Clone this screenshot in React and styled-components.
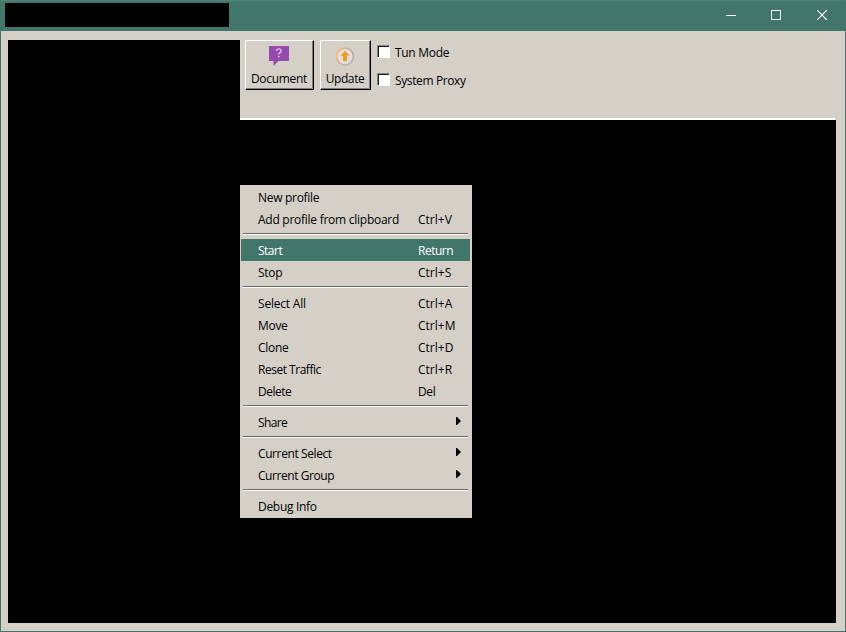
import React from "react";
import styled, { createGlobalStyle } from "styled-components";

const Global = createGlobalStyle`
  *, *::before, *::after { box-sizing: border-box; }
  body {
    margin: 0;
    overflow: hidden;
    background: #d4d0c8;
    font: 12px/16px "Open Sans", "Noto Sans", sans-serif;
    color: #000;
    cursor: default;
  }
`;

const Window = styled.div`
  width: 846px;
  height: 632px;
  display: flex;
  flex-direction: column;
  background: #d4d0c8;
  border: 1px solid #43766b;
  border-top: 0;
`;

const TitleBar = styled.header`
  height: 31px;
  flex: none;
  display: flex;
  justify-content: space-between;
  background: #43766b;
  border-top: 1px solid #508277;
  padding: 2px 0 0 4px;
`;

const TitleBlock = styled.div`
  width: 224px;
  height: 24px;
  background: #000;
`;

const WindowControls = styled.div`
  display: flex;
  margin: -3px -1px 0 0;
`;

const ControlButton = styled.button`
  width: 46px;
  height: 31px;
  padding: 0;
  border: 0;
  background: none;
  svg { display: block; }
`;

const Client = styled.main`
  flex: 1;
  display: flex;
  margin: 9px 9px 8px 7px;
  background: #000;
`;

const SidePanel = styled.div`
  width: 232px;
  background: #000;
`;

const Content = styled.div`
  flex: 1;
  display: flex;
  flex-direction: column;
`;

const Toolbar = styled.div`
  height: 78px;
  display: flex;
  align-items: flex-start;
  padding-left: 5px;
  background: #d4d0c8;
`;

const Divider = styled.div`
  height: 2px;
  background: #fff;
  border-right: 1px solid #d4d0c8;
`;

const ToolButton = styled.button`
  width: ${(p) => p.$width}px;
  height: 50px;
  margin-right: 6px;
  padding: 4px 1px 0 0;
  display: flex;
  flex-direction: column;
  align-items: center;
  border: 1px solid #fff;
  border-right-color: #000;
  border-bottom-color: #000;
  box-shadow: inset -1px -1px #808080;
  background: #d4d0c8;
  color: #000;
  font: inherit;
  svg { display: block; flex: none; }
`;

const Label = styled.span`
  display: block;
  white-space: pre;
  letter-spacing: ${(p) => p.$track ?? -0.3}px;
`;

const ToolLabel = styled(Label)`
  margin-top: 4px;
`;

const Options = styled.div`
  display: flex;
  flex-direction: column;
  gap: 12px;
  padding-top: 5px;
`;

const Option = styled.label`
  height: 16px;
  display: flex;
  gap: 5px;
`;

const CheckBox = styled.span`
  width: 13px;
  height: 13px;
  background: #fff;
  border: 1px solid #fff;
  border-top-color: #808080;
  border-left-color: #808080;
  box-shadow: inset 1px 1px #202020;
`;

const ContextMenu = styled.nav`
  position: absolute;
  left: 240px;
  top: 185px;
  width: 232px;
  height: 333px;
  padding: 1px 2px 1px 1px;
  background: #d4d0c8;
`;

const MenuItem = styled.div`
  height: 22px;
  display: grid;
  grid-template-columns: 160px 1fr;
  padding: 4px 8px 2px 17px;
  background: ${(p) => (p.$active ? "#43766b" : "transparent")};
  color: ${(p) => (p.$active ? "#fff" : "#000")};
`;

const Separator = styled.div`
  height: 2px;
  margin: 3px 2px 4px 2px;
  border-top: 1px solid #6b6963;
  border-bottom: 1px solid #fff;
`;

const Arrow = styled.svg`
  display: block;
  justify-self: end;
  margin: 2px 1px 0 0;
`;

const groups = [
  [
    { text: "New profile" },
    { text: "Add profile from clipboard", track: -0.26, key: "Ctrl+V" },
  ],
  [
    { text: "Start", track: -0.5, key: "Return", keyTrack: -0.5, active: true },
    { text: "Stop", key: "Ctrl+S" },
  ],
  [
    { text: "Select All", track: -0.2, key: "Ctrl+A" },
    { text: "Move", key: "Ctrl+M" },
    { text: "Clone", key: "Ctrl+D" },
    { text: "Reset Traffic", track: -0.48, key: "Ctrl+R" },
    { text: "Delete", track: -0.5, key: "Del", keyTrack: -0.4 },
  ],
  [{ text: "Share", track: -0.6, submenu: true }],
  [
    { text: "Current Select", track: -0.4, submenu: true },
    { text: "Current Group", track: -0.44, submenu: true },
  ],
  [{ text: "Debug Info" }],
];

const DocumentIcon = () => (
  <svg width="22" height="22" viewBox="0 0 22 22">
    <path d="M1 1h20v15H10.500l-5 5v-5H1z" fill="#964bac" />
    <path d="M8.500 6c0-2.800 4.600-2.800 4.600-.2 0 1.800-2.300 1.800-2.300 3.700" fill="none" stroke="#dfc0e8" strokeWidth="1.400" />
    <circle cx="10.800" cy="11.600" r=".9" fill="#dfc0e8" />
  </svg>
);

const UpdateIcon = () => (
  <svg width="22" height="22" viewBox="0 0 22 22">
    <defs>
      <linearGradient id="ring" x1="0" y1="0" x2="1" y2="0.300">
        <stop offset="0.150" stopColor="#f5b35c" />
        <stop offset="0.700" stopColor="#b2afa9" />
      </linearGradient>
    </defs>
    <circle cx="11" cy="11.500" r="8.500" fill="#e0ddda" stroke="url(#ring)" strokeWidth="1.600" />
    <path d="M11 5.800l4.600 5h-2.600v5.200H9v-5.200H6.400z" fill="#f59a23" />
  </svg>
);

export default function App() {
  return (
    <>
      <Global />
      <Window>
        <TitleBar>
          <TitleBlock />
          <WindowControls>
            <ControlButton aria-label="Minimize">
              <svg width="46" height="31"><path d="M18 15.5h10" stroke="#fff" /></svg>
            </ControlButton>
            <ControlButton aria-label="Maximize">
              <svg width="46" height="31"><path d="M17.5 10.5h9v9h-9z" fill="none" stroke="#fff" /></svg>
            </ControlButton>
            <ControlButton aria-label="Close">
              <svg width="46" height="31"><path d="M17.200 10.200l9.600 9.600M26.800 10.200l-9.600 9.600" stroke="#fff" strokeWidth="1.200" /></svg>
            </ControlButton>
          </WindowControls>
        </TitleBar>
        <Client>
          <SidePanel />
          <Content>
            <Toolbar>
              <ToolButton $width={69}>
                <DocumentIcon />
                <ToolLabel>Document</ToolLabel>
              </ToolButton>
              <ToolButton $width={51}>
                <UpdateIcon />
                <ToolLabel $track={-0.4}>Update</ToolLabel>
              </ToolButton>
              <Options>
                <Option><CheckBox /><Label>Tun Mode</Label></Option>
                <Option><CheckBox /><Label $track={-0.38}>System Proxy</Label></Option>
              </Options>
            </Toolbar>
            <Divider />
          </Content>
        </Client>
      </Window>
      <ContextMenu>
        {groups.map((items, index) => (
          <React.Fragment key={index}>
            {index > 0 && <Separator />}
            {items.map((item) => (
              <MenuItem key={item.text} $active={item.active}>
                <Label $track={item.track}>{item.text}</Label>
                {item.key && <Label $track={item.keyTrack ?? 0}>{item.key}</Label>}
                {item.submenu && (
                  <Arrow width="5" height="8"><path d="M0 0h1l4 4-4 4H0z" /></Arrow>
                )}
              </MenuItem>
            ))}
          </React.Fragment>
        ))}
      </ContextMenu>
    </>
  );
}
